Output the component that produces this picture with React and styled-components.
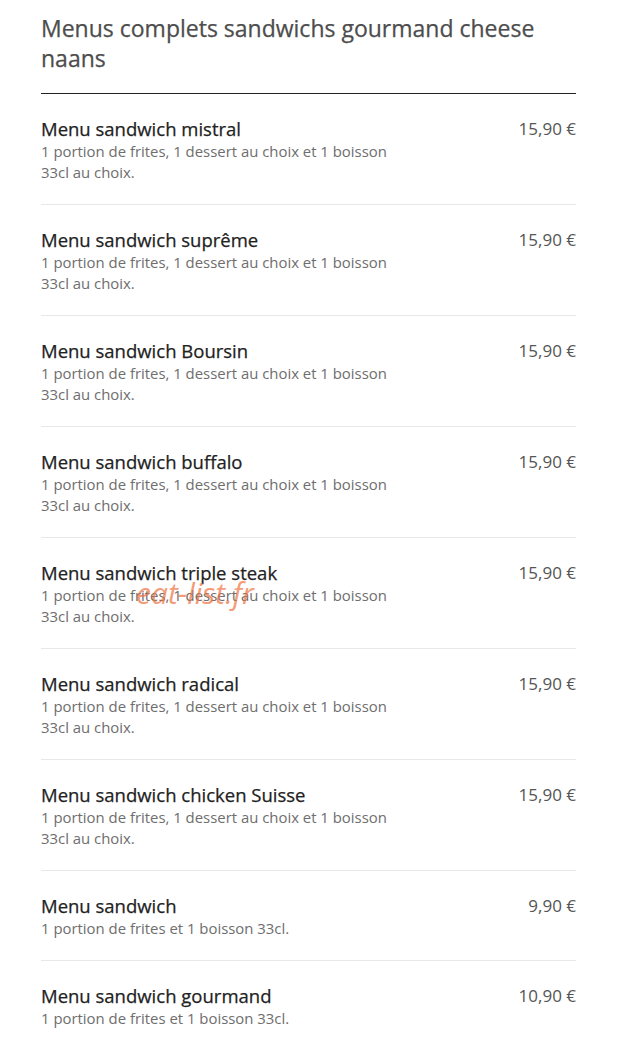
import React from 'react';
import styled, { createGlobalStyle } from 'styled-components';

const GlobalStyle = createGlobalStyle`
  body {
    margin: 0;
    background: #fff;
    font-family: "Open Sans", "Liberation Sans", sans-serif;
  }
`;

const Page = styled.div`
  position: relative;
  width: 535px;
  margin: 0 0 0 41px;
  padding-top: 13px;
`;

const Title = styled.h2`
  margin: 0;
  padding-bottom: 20px;
  border-bottom: 1px solid #222;
  font-size: 23px;
  line-height: 30px;
  font-weight: 400;
  color: #4d4d4d;
  -webkit-text-stroke: 0.25px #4d4d4d;
`;

const Row = styled.div`
  display: flex;
  justify-content: space-between;
  align-items: flex-start;
  padding: 23px 0 21px;
  border-bottom: ${p => (p.$last ? 'none' : '1px solid #e8e8e8')};
`;

const Info = styled.div`
  width: 362px;
`;

const Name = styled.div`
  font-size: 18.5px;
  line-height: 24px;
  color: #222;
  -webkit-text-stroke: 0.25px #222;
`;

const Desc = styled.div`
  font-size: 14.9px;
  line-height: 21px;
  color: #6e6e6e;
`;

const Price = styled.div`
  font-size: 17px;
  line-height: 24px;
  color: #555;
  white-space: nowrap;
`;

const Watermark = styled.div`
  position: absolute;
  left: 95px;
  top: 572px;
  font-size: 30px;
  font-style: italic;
  color: rgba(240, 110, 60, 0.7);
  pointer-events: none;
`;

const long = '1 portion de frites, 1 dessert au choix et 1 boisson 33cl au choix.';
const short = '1 portion de frites et 1 boisson 33cl.';

const items = [
  { name: 'Menu sandwich mistral', desc: long, price: '15,90 €' },
  { name: 'Menu sandwich suprême', desc: long, price: '15,90 €' },
  { name: 'Menu sandwich Boursin', desc: long, price: '15,90 €' },
  { name: 'Menu sandwich buffalo', desc: long, price: '15,90 €' },
  { name: 'Menu sandwich triple steak', desc: long, price: '15,90 €' },
  { name: 'Menu sandwich radical', desc: long, price: '15,90 €' },
  { name: 'Menu sandwich chicken Suisse', desc: long, price: '15,90 €' },
  { name: 'Menu sandwich', desc: short, price: '9,90 €' },
  { name: 'Menu sandwich gourmand', desc: short, price: '10,90 €' },
];

export default function App() {
  return (
    <>
      <GlobalStyle />
      <Page>
        <Title>Menus complets sandwichs gourmand cheese naans</Title>
        {items.map((it, i) => (
          <Row key={i} $last={i === items.length - 1}>
            <Info>
              <Name>{it.name}</Name>
              <Desc>{it.desc}</Desc>
            </Info>
            <Price>{it.price}</Price>
          </Row>
        ))}
        <Watermark>eat-list.fr</Watermark>
      </Page>
    </>
  );
}
